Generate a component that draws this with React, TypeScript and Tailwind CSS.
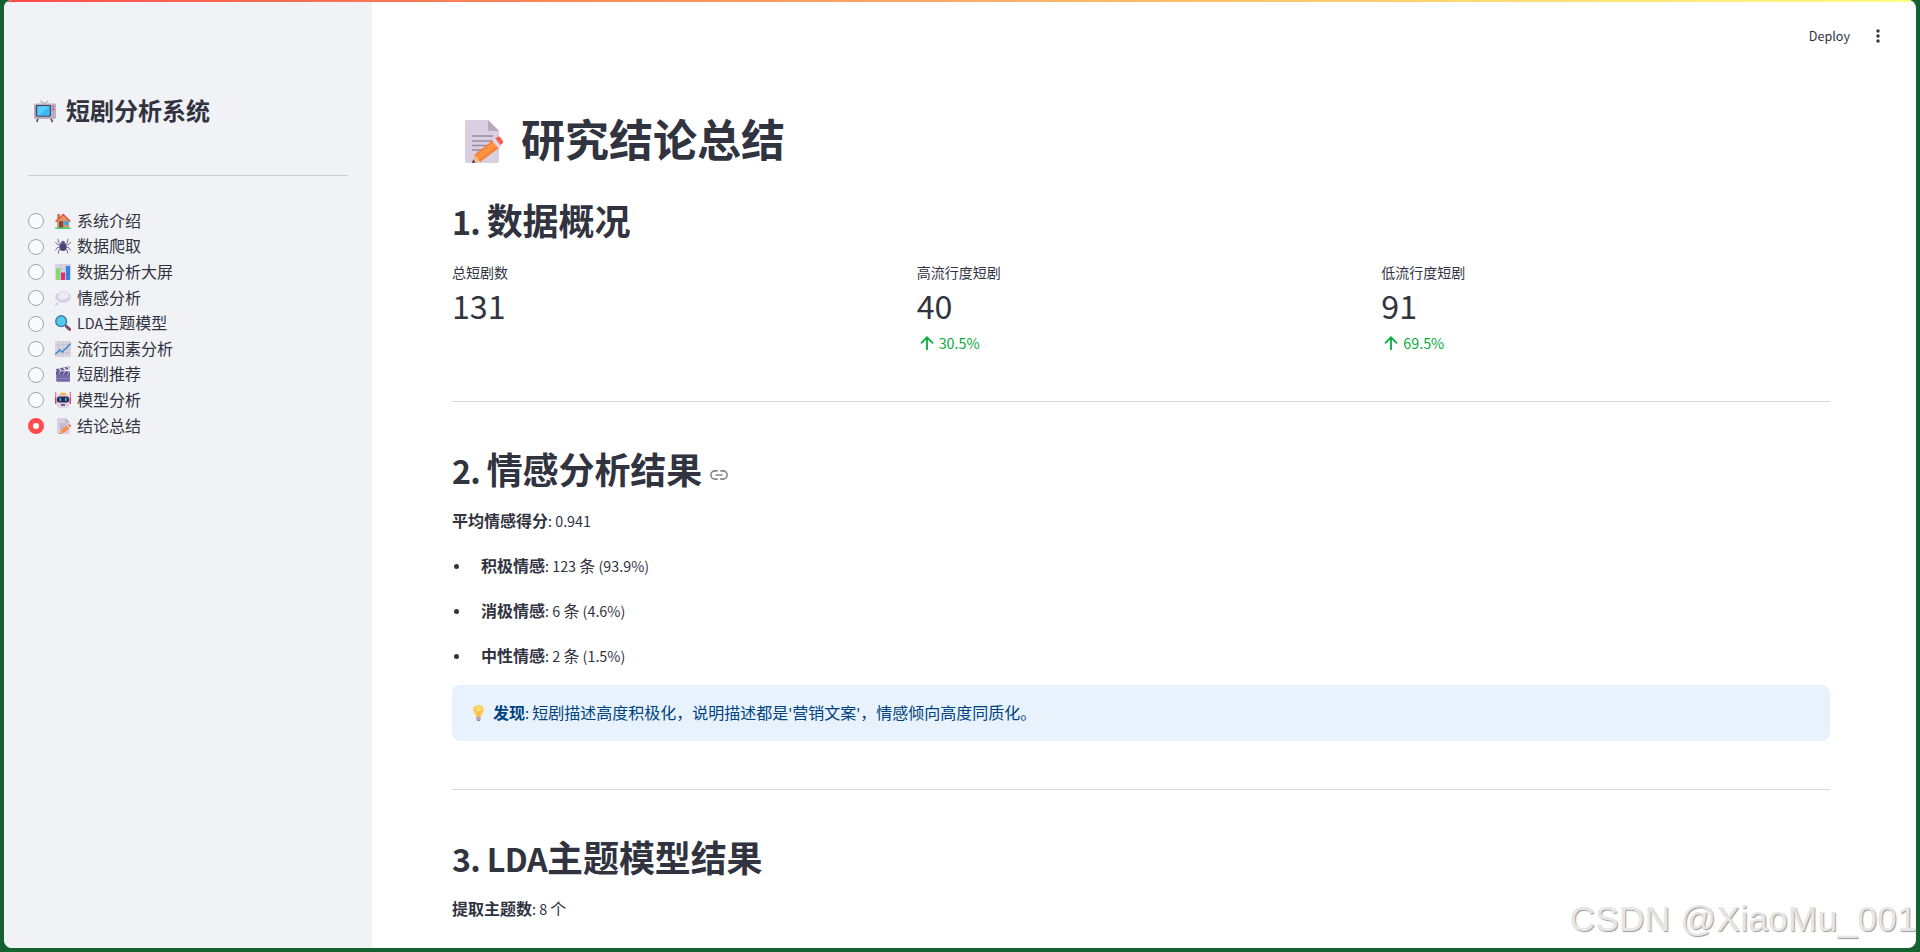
import React from 'react';

const svgProps = { viewBox: '0 0 16 16', className: 'w-full h-full block' };

const TvIcon = () => (
    <svg {...svgProps} viewBox="0 0 24 24">
        <path d="M7 .5 L11.5 3.5 L15.5 .5" fill="none" stroke="#aaa0ab" strokeWidth="1.1" />
        <path d="M4.5 19 L3.2 23.5 M18 19 L20.3 23.5" stroke="#594575" strokeWidth="1.8" />
        <rect x="0" y="3.2" width="24" height="17" rx="1.8" fill="#b9adc0" />
        <rect x="2" y="5" width="16.5" height="12.8" rx="1.6" fill="#4b4460" />
        <rect x="3.4" y="6.2" width="13.8" height="10.3" rx="0.8" fill="#3db8f5" />
        <path d="M4 6.2 H17 L5 16.3 H4 Z" fill="#5ccdfa" />
        <circle cx="20.8" cy="6.5" r="1" fill="#84728f" />
        <circle cx="20.8" cy="9.8" r="1.1" fill="#d6477b" />
    </svg>
);

const HouseIcon = () => (
    <svg {...svgProps}>
        <rect x="2.3" y="1" width="2.6" height="6" fill="#c9744e" />
        <path d="M2 8 L8 2.5 L14 8 V15 H2 Z" fill="#d99a68" />
        <rect x="4" y="8.2" width="4.2" height="6.6" fill="#7e4a42" />
        <rect x="9.5" y="8.2" width="4" height="4" fill="#35a7f0" />
        <path d="M.7 8.6 L8.3 1.6 L15.3 8.6" fill="none" stroke="#ee5340" strokeWidth="1.6" />
        <rect x="0" y="14.6" width="16" height="1.4" fill="#3fd977" />
    </svg>
);

const SpiderIcon = () => (
    <svg {...svgProps}>
        <path d="M6 6 L3.5 4.5 L3 .8 M10 6 L12.5 4.5 L13 .8 M6 7.5 L2.5 6.5 L.3 4 M10 7.5 L13.5 6.5 L15.7 4 M6 9 L2.5 9.5 L.3 12.5 M10 9 L13.5 9.5 L15.7 12.5 M6 10 L4 12 L3.3 15.5 M10 10 L12 12 L12.7 15.5" fill="none" stroke="#645a86" strokeWidth=".9" />
        <ellipse cx="8" cy="9" rx="3.5" ry="4" fill="#4c4374" />
        <circle cx="8" cy="4.5" r="1.8" fill="#5d5488" />
    </svg>
);

const BarsIcon = () => (
    <svg {...svgProps}>
        <rect width="16" height="16" rx="1" fill="#d9d2e2" />
        <path d="M5.5 0 V16 M10.7 0 V16 M0 5 H16 M0 10 H16" stroke="#c0b7cc" strokeWidth=".6" />
        <path d="M1 4.3 H5 V16 H1 Z" fill="#80dc70" />
        <path d="M6 8.5 H10 V16 H6 Z" fill="#e22b70" />
        <path d="M11 2 H15 V16 H11 Z" fill="#3484dd" />
    </svg>
);

const BubbleIcon = () => (
    <svg {...svgProps}>
        <path d="M4 2.5 Q6 .5 8.5 1.3 Q12 .5 13.5 3 Q16 4 15.8 7 Q16 10 13 11.2 Q11 13.5 8 12.5 Q4.5 13.5 3 11 Q0 10 .3 6.8 Q.3 3.7 4 2.5 Z" fill="#d8cee5" />
        <path d="M4.5 3 Q8 1 11.5 2.3 Q14.4 4 13.9 7 Q10 10.3 5 9.5 Q1.8 7 4.5 3 Z" fill="#eeeaf4" />
        <circle cx="1.9" cy="14" r="1.3" fill="#d4c9e1" />
        <circle cx=".5" cy="15.6" r=".6" fill="#cfc3dc" />
    </svg>
);

const SearchIcon = () => (
    <svg {...svgProps}>
        <path d="M9.6 9.6 L11.5 11.5" stroke="#9c8aa8" strokeWidth="1.6" />
        <path d="M11.4 11.4 L14.6 14.4" stroke="#82466f" strokeWidth="3" strokeLinecap="round" />
        <circle cx="6.2" cy="6.2" r="5.4" fill="#4fcbee" stroke="#4177ad" strokeWidth="1.4" />
    </svg>
);

const TrendIcon = () => (
    <svg {...svgProps}>
        <rect width="16" height="16" rx="1" fill="#dbd5e3" />
        <path d="M4 0 V16 M8 0 V16 M12 0 V16 M0 4 H16 M0 8 H16 M0 12 H16" stroke="#bfb6cb" strokeWidth=".6" />
        <path d="M.3 13.3 L4.7 9 L7.3 11 L15.7 2.5" fill="none" stroke="#3589ce" strokeWidth="1.4" />
    </svg>
);

const ClapperIcon = () => (
    <svg {...svgProps}>
        <path d="M1 3 L14.5 .2 L15 3 L1.7 5.8 Z" fill="#6a5e9b" />
        <path d="M4 2.4 L6.2 4.8 M8.5 1.5 L10.7 3.8 M12.6 .7 L14.6 3" stroke="#e8e2f2" strokeWidth="1.4" />
        <rect x="1.2" y="5.6" width="13.8" height="10.2" rx=".8" fill="#7469a8" />
        <path d="M1.2 5.6 H15 V8.6 H1.2 Z" fill="#5d5191" />
        <path d="M3.5 8.6 L5.5 5.6 M8 8.6 L10 5.6 M12.5 8.6 L14.5 5.6" stroke="#c9c0dc" strokeWidth="1" />
        <path d="M1.2 12.5 H15" stroke="#9489bd" strokeWidth=".7" />
    </svg>
);

const RobotIcon = () => (
    <svg {...svgProps}>
        <path d="M.7 0 V12 M15.3 0 V12" stroke="#ee6c90" strokeWidth="1.2" />
        <rect x="0" y="5.5" width="2" height="6" rx=".5" fill="#e3386c" />
        <rect x="14" y="5.5" width="2" height="6" rx=".5" fill="#e3386c" />
        <path d="M3 2.3 H13 Q14.8 3 14.6 8 Q14.8 15.8 12 15.8 H4 Q1.2 15.8 1.4 8 Q1.2 3 3 2.3 Z" fill="#e0d1e8" />
        <rect x="5" y=".8" width="6" height="2.4" rx="1" fill="#f5b143" />
        <rect x="2" y="4.6" width="12" height="6" rx="2.3" fill="#2c2948" />
        <rect x="4.3" y="5.8" width="1.8" height="3.4" rx=".8" fill="#33aef4" />
        <rect x="9.9" y="5.8" width="1.8" height="3.4" rx=".8" fill="#33aef4" />
        <rect x="6" y="12.2" width="4" height="1.4" fill="#40354f" />
    </svg>
);

const MemoIcon = () => (
    <svg viewBox="0 0 38 43" className="w-full h-full block">
        <path d="M1.5 0 H23 L34 11 V41 Q34 43 32 43 H1.5 Q0 43 0 41 V1.5 Q0 0 1.5 0 Z" fill="#d9cfe0" />
        <path d="M23 0 L34 11 H24.5 Q23 11 23 9.5 Z" fill="#b5a9bd" />
        <path d="M7 16 H28 M7 21 H28 M7 25.5 H24 M7 30 H18" stroke="#978ba0" strokeWidth="1.5" />
        <path d="M9.5 34.5 L27.5 20.5 L34 28 L15 42 Z" fill="#f5823a" />
        <path d="M10.8 36 L28.8 22 L32 26 L13.3 40 Z" fill="#fe9443" />
        <path d="M27.2 20.8 L30.3 18.2 L37 26 L33.7 28.6 Z" fill="#e2dae8" />
        <path d="M30.3 18.4 L32.6 16.8 Q34 16 35.2 17.3 L38 21 Q38.4 22.5 37.3 23.5 L35.3 25 Z" fill="#fb5f50" />
        <path d="M9.5 34.5 L15 42 L7 43 Z" fill="#f0bd93" />
        <path d="M8.3 39.5 L10.5 42.6 L7 43 Z" fill="#4b2a48" />
    </svg>
);

const BulbIcon = () => (
    <svg viewBox="0 0 11 16" className="w-full h-full block">
        <path d="M5.5 0 Q10.8 .3 10.8 5.2 Q10.5 7.5 8.8 9.3 Q8 10.5 7.8 12 H3.2 Q3 10.5 2.2 9.3 Q.4 7.5 .2 5.2 Q.4 .3 5.5 0 Z" fill="#fdc84e" />
        <path d="M4.5 1.3 Q8 1 8.3 4.5 Q7 7.5 4 6.5 Q1.5 4 4.5 1.3 Z" fill="#ffe07a" />
        <path d="M4 6 L5 8 V12 M7 6 L6 8 V12" fill="none" stroke="#f0a43c" strokeWidth=".5" />
        <rect x="3.3" y="12" width="4.4" height="3.2" rx=".6" fill="#b5a4c0" />
        <rect x="4.2" y="15" width="2.6" height="1" fill="#8d7a9d" />
    </svg>
);

const LinkIcon = () => (
    <svg viewBox="0 0 18 10" className="w-[18px] h-[10px] block" fill="none" stroke="#85868e" strokeWidth="1.6">
        <path d="M7.7 .9 H5 A4.1 4.1 0 0 0 5 9.1 H7.7 M10.3 .9 H13 A4.1 4.1 0 0 1 13 9.1 H10.3 M5.5 5 H12.5" />
    </svg>
);

const ArrowUp = () => (
    <svg viewBox="0 0 14 14" className="w-[14px] h-[14px] block" fill="none" stroke="#09ab3b" strokeWidth="1.8">
        <path d="M7 14 V1.5 M1 7.3 L7 1.3 L13 7.3" />
    </svg>
);

// Latin letters and digits run slightly smaller than the Chinese glyphs
const En = ({ children }: any) => <span className="text-[0.895em] leading-none">{children}</span>;

const menu = [
    { icon: <HouseIcon />, label: '系统介绍' },
    { icon: <SpiderIcon />, label: '数据爬取' },
    { icon: <BarsIcon />, label: '数据分析大屏' },
    { icon: <BubbleIcon />, label: '情感分析' },
    { icon: <SearchIcon />, label: <><En>LDA</En>主题模型</> },
    { icon: <TrendIcon />, label: '流行因素分析' },
    { icon: <ClapperIcon />, label: '短剧推荐' },
    { icon: <RobotIcon />, label: '模型分析' },
    { icon: <MemoIcon />, label: '结论总结', active: true },
];

const sentiments = [
    { name: '积极情感', count: '123', pct: '(93.9%)' },
    { name: '消极情感', count: '6', pct: '(4.6%)' },
    { name: '中性情感', count: '2', pct: '(1.5%)' },
];

const Metric = ({ label, value, delta }: any) => (
    <div className="flex-1">
        <p className="text-sm leading-5">{label}</p>
        <p className="text-[32.2px] leading-[46px]">{value}</p>
        {delta && (
            <div className="flex items-center gap-[5px] pl-[3px] mt-[3px] h-6 text-[#09ab3b]">
                <ArrowUp />
                <span className="text-[14.3px] leading-6">{delta}</span>
            </div>
        )}
    </div>
);

const Heading = ({ no, children, link }: any) => (
    <h2 className="flex items-center h-[44px] text-4xl leading-[44px] tracking-[-0.1px] font-bold whitespace-pre">
        <span><span className="tracking-[-0.7px]"><En>{no}. </En></span>{children}</span>
        {link && <span className="ml-2 mt-[13px]"><LinkIcon /></span>}
    </h2>
);

export default function App() {
    return (
        <div className="relative w-[1920px] h-[952px] overflow-hidden bg-[#13622f] px-1 pb-1 text-[#31333f] font-['Noto_Sans_CJK_SC',sans-serif]">
            <div className="flex flex-col h-full rounded-[8px] overflow-hidden bg-white">
                <div className="h-[2px] shrink-0 bg-linear-to-r from-[#ff4b4b] to-[#fffd80]" />
                <div className="flex flex-1 min-h-0">
                    {/* Sidebar */}
                    <aside className="w-[368px] shrink-0 bg-[#f0f2f6] pl-6 pr-6">
                        <div className="flex items-center mt-[90px] h-9 pl-[6px]">
                            <span className="w-[22px] h-[23px] mt-[2px]"><TvIcon /></span>
                            <h1 className="ml-[10px] text-2xl leading-9 font-bold">短剧分析系统</h1>
                        </div>
                        <hr className="mt-[47px] border-[#cccdd3]" />
                        <ul className="mt-[32px]">
                            {menu.map((item, i) => (
                                <li key={i} className="flex items-center h-[25.6px]">
                                    {item.active ? (
                                        <span className="w-4 h-4 rounded-full border-[5px] border-[#ff4b4b] bg-white" />
                                    ) : (
                                        <span className="w-4 h-4 mt-px rounded-full border border-[#a3a4ab] bg-[#f9fafc]" />
                                    )}
                                    <span className={item.active ? 'w-[14px] h-4 ml-[13px] mr-[6px]' : 'w-4 h-4 ml-[11px] mr-[6px]'}>{item.icon}</span>
                                    <span className="leading-6 pb-[2px]">{item.label}</span>
                                </li>
                            ))}
                        </ul>
                    </aside>

                    {/* Main content */}
                    <main className="flex-1 pl-20 pr-[86px]">
                        <div className="flex items-center justify-end h-[68px] -mr-[50px] gap-[26px]">
                            <span className="text-[12.6px] leading-5">Deploy</span>
                            <svg viewBox="0 0 4 14" className="w-1 h-[14px]" fill="#31333f">
                                <circle cx="2" cy="2" r="1.7" />
                                <circle cx="2" cy="7" r="1.7" />
                                <circle cx="2" cy="12" r="1.7" />
                            </svg>
                        </div>

                        <div className="flex items-center h-[60px] mt-[38px] pl-[13px]">
                            <span className="w-[38px] h-[43px] mt-[6px]"><MemoIcon /></span>
                            <h1 className="ml-[18px] text-[44px] leading-[60px] font-bold">研究结论总结</h1>
                        </div>

                        <div className="mt-[29px]"><Heading no="1">数据概况</Heading></div>
                        <div className="flex gap-4 mt-[21px] h-[99px]">
                            <Metric label="总短剧数" value="131" />
                            <Metric label="高流行度短剧" value="40" delta="30.5%" />
                            <Metric label="低流行度短剧" value="91" delta="69.5%" />
                        </div>
                        <hr className="mt-[40px] border-[#d6d6d9]" />

                        <div className="mt-[44px]"><Heading no="2" link>情感分析结果</Heading></div>
                        <p className="mt-[18px] h-6 leading-6 whitespace-nowrap"><b>平均情感得分</b><En>: 0.941</En></p>
                        <ul className="mt-[21px] space-y-[21px]">
                            {sentiments.map((s) => (
                                <li key={s.name} className="flex items-center h-6 leading-6 whitespace-pre">
                                    <span className="w-[5px] h-[5px] rounded-full bg-[#31333f] ml-[2px] mr-[22px] mt-[3px]" />
                                    <span><b>{s.name}</b><En>: {s.count} </En>条<En> {s.pct}</En></span>
                                </li>
                            ))}
                        </ul>
                        <div className="flex items-center mt-[18px] h-14 pl-[21px] rounded-lg bg-[#e8f2fc] text-[#004280]">
                            <span className="w-[11px] h-4"><BulbIcon /></span>
                            <p className="ml-[9px] leading-6 whitespace-pre pb-[2px]"><b>发现</b><En>: </En>短剧描述高度积极化，说明描述都是<En>'</En>营销文案<En>'</En>，情感倾向高度同质化。</p>
                        </div>
                        <hr className="mt-[48px] border-[#d6d6d9]" />

                        <div className="mt-[44px]"><Heading no="3"><span className="tracking-[-0.5px]"><En>LDA</En></span>主题模型结果</Heading></div>
                        <p className="mt-[18px] leading-6 whitespace-pre"><b>提取主题数</b><En>: 8 </En>个</p>
                    </main>
                </div>
            </div>

            {/* Watermark */}
            <div className="absolute right-[3px] bottom-[10px] font-['Liberation_Sans',sans-serif] text-[35px] leading-[46px] tracking-[0.4px] whitespace-nowrap text-[#e6e6e6] [text-shadow:1px_1px_1px_#999]">
                CSDN @XiaoMu_001
            </div>
        </div>
    );
}
